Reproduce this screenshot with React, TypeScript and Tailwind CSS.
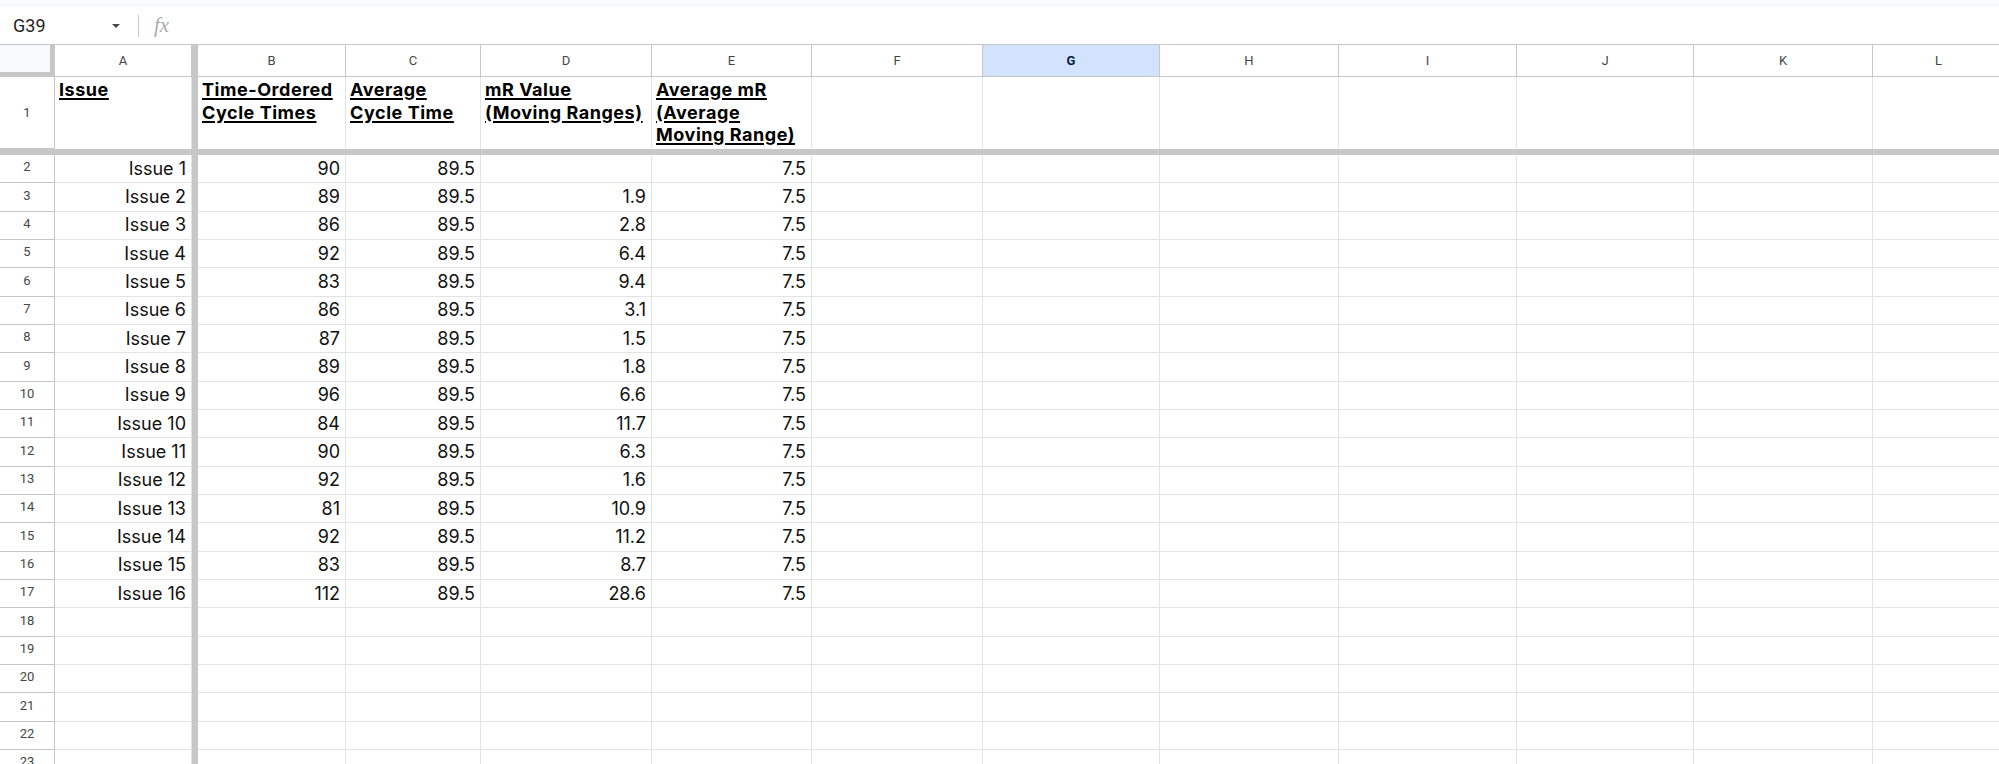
import React from 'react';

type Col = { key: string; w: string; bar?: boolean };

const columns: Col[] = [
  { key: 'A', w: 'w-[137px]' },
  { key: '|', w: 'w-[6px]', bar: true },
  { key: 'B', w: 'w-[148px]' },
  { key: 'C', w: 'w-[135px]' },
  { key: 'D', w: 'w-[171px]' },
  { key: 'E', w: 'w-[160px]' },
  { key: 'F', w: 'w-[171px]' },
  { key: 'G', w: 'w-[177px]' },
  { key: 'H', w: 'w-[179px]' },
  { key: 'I', w: 'w-[178px]' },
  { key: 'J', w: 'w-[177px]' },
  { key: 'K', w: 'w-[179px]' },
  { key: 'L', w: 'w-[132px]' },
];

const headers: Record<string, string[]> = {
  A: ['Issue'],
  B: ['Time-Ordered', 'Cycle Times'],
  C: ['Average', 'Cycle Time'],
  D: ['mR Value', '(Moving Ranges)'],
  E: ['Average mR', '(Average', 'Moving Range)'],
};

// [cycle time, mR]
const data: [string, string][] = [
  ['90', ''],
  ['89', '1.9'],
  ['86', '2.8'],
  ['92', '6.4'],
  ['83', '9.4'],
  ['86', '3.1'],
  ['87', '1.5'],
  ['89', '1.8'],
  ['96', '6.6'],
  ['84', '11.7'],
  ['90', '6.3'],
  ['92', '1.6'],
  ['81', '10.9'],
  ['92', '11.2'],
  ['83', '8.7'],
  ['112', '28.6'],
];

const FreezeBar = () => <div className="w-[6px] shrink-0 self-stretch bg-[#c7c7c7]" />;

const FormulaBar = () => (
  <div>
    <div className="h-[7px] bg-[#f9fbfd]" />
    <div className="h-[38px] flex items-center border-b border-[#c4c7c5] bg-white">
      <div className="w-[125px] flex items-center justify-between pl-[13px] pr-[5px]">
        <span className="font-['Roboto',sans-serif] text-[18px] text-[#1f1f1f]">G39</span>
        <svg width="8" height="4" viewBox="0 0 8 4">
          <path d="M0 0h8L4 4z" fill="#444746" />
        </svg>
      </div>
      <div className="ml-[13px] w-px h-[22px] bg-[#c4c7c5]" />
      <span className="ml-[15px] font-['Liberation_Serif',serif] italic text-[21px] text-[#a8abae] leading-none">
        fx
      </span>
    </div>
  </div>
);

const ColumnHeaders = () => (
  <div className="flex h-[32px]">
    <div className="w-[55px] shrink-0 bg-[#f8f9fa] border-r-[5px] border-b-[5px] border-[#c7c7c7]" />
    {columns.map(c =>
      c.bar ? (
        <FreezeBar key={c.key} />
      ) : (
        <div
          key={c.key}
          className={`${c.w} shrink-0 flex items-center justify-center border-r border-b border-[#c4c7c5] font-['Roboto',sans-serif] text-[13px] ${
            c.key === 'G' ? 'bg-[#d3e3fd] text-[#041e49] font-bold' : 'bg-white text-[#444746]'
          }`}
        >
          {c.key}
        </div>
      )
    )}
  </div>
);

const RowHeader = ({ n, tall }: { n: number; tall?: boolean }) => (
  <div
    className={`w-[55px] shrink-0 flex items-center justify-center border-r border-b border-[#c4c7c5] font-['Roboto',sans-serif] text-[13px] text-[#444746] ${
      tall ? '' : 'pb-[3px]'
    }`}
  >
    {n}
  </div>
);

const TitleRow = () => (
  <div className="flex h-[72px]">
    <RowHeader n={1} tall />
    {columns.map(c =>
      c.bar ? (
        <FreezeBar key={c.key} />
      ) : (
        <div
          key={c.key}
          className={`${c.w} shrink-0 border-r border-[#e2e3e3] px-[4px] pt-[2px] text-[18px] leading-[22.5px] font-bold text-black tracking-[0.03em]`}
        >
          {(headers[c.key] || []).map(line => (
            <div key={line} className="underline decoration-[1.5px] underline-offset-[2px] whitespace-nowrap">
              {line}
            </div>
          ))}
        </div>
      )
    )}
  </div>
);

const DataRow = ({ n, cells }: { n: number; cells: Record<string, string> }) => (
  <div className="flex h-[28.33px]">
    <RowHeader n={n} />
    {columns.map(c =>
      c.bar ? (
        <FreezeBar key={c.key} />
      ) : (
        <div
          key={c.key}
          className={`${c.w} shrink-0 flex items-center justify-end border-r border-b border-[#e2e3e3] px-[5px] text-[18px] leading-[28px] text-[#111] whitespace-nowrap`}
        >
          {cells[c.key] || ''}
        </div>
      )
    )}
  </div>
);

export default function App() {
  const rows: Record<string, string>[] = data.map(([b, d], i) => ({
    A: `Issue ${i + 1}`,
    B: b,
    C: '89.5',
    D: d,
    E: '7.5',
  }));
  for (let i = 0; i < 6; i++) rows.push({});

  return (
    <div className="w-[1999px] h-[764px] overflow-hidden bg-white font-['Inter',sans-serif]">
      <FormulaBar />
      <ColumnHeaders />
      <TitleRow />
      <div className="h-[6px] bg-[#c7c7c7]" />
      {rows.map((cells, i) => (
        <DataRow key={i} n={i + 2} cells={cells} />
      ))}
    </div>
  );
}
